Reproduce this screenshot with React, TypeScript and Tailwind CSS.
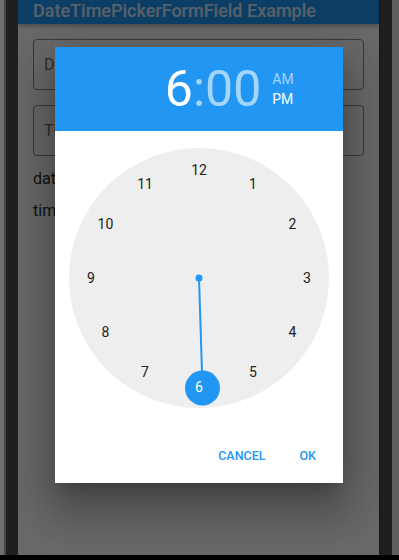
import React from 'react';

const NUMBERS = [12, 1, 2, 3, 4, 5, 6, 7, 8, 9, 10, 11];
const DIAL = 260;
const RADIUS = 108;

function ClockDial() {
  const c = DIAL / 2;
  return (
    <div className="relative w-[260px] h-[260px] rounded-full bg-[#eeeeee]">
      <svg className="absolute inset-0" width={DIAL} height={DIAL} viewBox="0 0 260 260">
        <line x1="130" y1="130" x2="133.5" y2="240" stroke="#2196F3" strokeWidth="2" />
        <circle cx="130" cy="130" r="3.5" fill="#2196F3" />
        <circle cx="133.5" cy="240" r="17.5" fill="#2196F3" />
      </svg>
      {NUMBERS.map((n, i) => {
        const a = (i * Math.PI) / 6;
        const x = c + RADIUS * Math.sin(a);
        const y = c - RADIUS * Math.cos(a);
        const selected = n === 6;
        return (
          <span
            key={n}
            className={`absolute -translate-x-1/2 -translate-y-1/2 text-[14px] leading-none ${
              selected ? 'text-white' : 'text-[#212121]'
            }`}
            style={{ left: x, top: y + (selected ? 0.5 : 0) }}
          >
            {n}
          </span>
        );
      })}
    </div>
  );
}

function TimePickerDialog() {
  return (
    <div className="absolute left-[37px] top-[47px] w-[288px] h-[436px] bg-white flex flex-col shadow-[0_28px_40px_6px_rgba(0,0,0,0.22),0_9px_46px_8px_rgba(0,0,0,0.14),0_11px_15px_-7px_rgba(0,0,0,0.2)]">
      <div className="h-[84px] bg-[#2196F3] grid grid-cols-[1fr_auto_1fr] items-center">
        <div className="flex justify-end">
          <span className="text-[50px] leading-none font-normal text-white">6</span>
        </div>
        <span className="text-[50px] leading-none font-normal text-white/60">:</span>
        <div className="flex items-center">
          <span className="text-[50px] leading-none font-normal text-white/60">00</span>
          <div className="ml-[11px] flex flex-col text-[14px] leading-[20px]">
            <span className="text-white/60">AM</span>
            <span className="text-white">PM</span>
          </div>
        </div>
      </div>
      <div className="flex justify-center pt-[17px]">
        <ClockDial />
      </div>
      <div className="mt-auto h-[36px] mb-[9px] flex items-center justify-end gap-[34px] pr-[27px] text-[12.5px] font-medium text-[#2196F3]">
        <span>CANCEL</span>
        <span>OK</span>
      </div>
    </div>
  );
}

export default function App() {
  return (
    <div
      className="w-[399px] h-[560px] bg-black flex flex-col overflow-hidden"
      style={{ fontFamily: 'Roboto, "Noto Sans", sans-serif' }}
    >
      <div className="h-[555px] flex">
        <div className="w-[18px] h-full bg-[linear-gradient(to_right,#6e6e6e_0_4px,#474747_4px_6px,#1f1f1f_6px)]" />
        <div className="relative w-[361px] h-full bg-[#fafafa] overflow-hidden">
          <div className="relative z-10 h-[24px] bg-[#2196F3] flex items-end px-[15px] pb-[4px] shadow-[0_2px_4px_rgba(0,0,0,0.3)]">
            <span className="text-[18px] leading-[18px] font-medium text-white/80 whitespace-nowrap">
              DateTimePickerFormField Example
            </span>
          </div>
          <div className="px-[15px] pt-[15px] flex flex-col">
            <div className="h-[51px] rounded-[4px] border border-black/45 flex items-center px-[10px]">
              <span className="text-[16px] text-black/60">Date</span>
            </div>
            <div className="mt-[15px] h-[51px] rounded-[4px] border border-black/45 flex items-center px-[10px]">
              <span className="text-[16px] text-black/60">Time</span>
            </div>
            <p className="mt-[11px] text-[16px] leading-[24px] text-black/85">date: null</p>
            <p className="mt-[8px] text-[16px] leading-[24px] text-black/85">time: null</p>
          </div>
          <div className="absolute inset-0 z-20 bg-black/[0.58]" />
          <div className="absolute inset-0 z-30">
            <TimePickerDialog />
          </div>
        </div>
        <div className="w-[20px] h-full bg-[linear-gradient(to_right,#151515_0_1px,#1f1f1f_1px_13px,#5f5f5f_13px)]" />
      </div>
    </div>
  );
}
